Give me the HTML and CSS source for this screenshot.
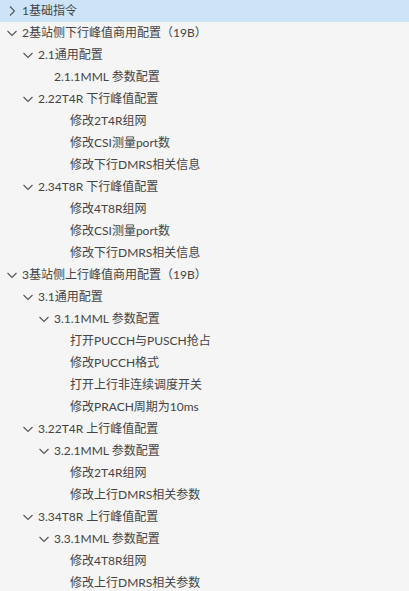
FILE: index.html
```html
<!DOCTYPE html>
<html>
<head>
<meta charset="utf-8">
<link rel="stylesheet" href="styles.css">
</head>
<body>
<div class="tree">
  <div class="row l0 selected"><span class="tw"><svg viewBox="0 0 16 16"><path d="M6 3.5 L10.5 8 L6 12.5"/></svg></span><span class="label">1基础指令</span></div>
  <div class="row l0"><span class="tw"><svg viewBox="0 0 16 16"><path d="M3.5 6 L8 10.5 L12.5 6"/></svg></span><span class="label">2基站侧下行峰值商用配置（19B）</span></div>
  <div class="row l1"><span class="tw"><svg viewBox="0 0 16 16"><path d="M3.5 6 L8 10.5 L12.5 6"/></svg></span><span class="label">2.1通用配置</span></div>
  <div class="row l2"><span class="tw"></span><span class="label">2.1.1MML 参数配置</span></div>
  <div class="row l1"><span class="tw"><svg viewBox="0 0 16 16"><path d="M3.5 6 L8 10.5 L12.5 6"/></svg></span><span class="label">2.22T4R 下行峰值配置</span></div>
  <div class="row l3"><span class="tw"></span><span class="label">修改2T4R组网</span></div>
  <div class="row l3"><span class="tw"></span><span class="label">修改CSI测量port数</span></div>
  <div class="row l3"><span class="tw"></span><span class="label">修改下行DMRS相关信息</span></div>
  <div class="row l1"><span class="tw"><svg viewBox="0 0 16 16"><path d="M3.5 6 L8 10.5 L12.5 6"/></svg></span><span class="label">2.34T8R 下行峰值配置</span></div>
  <div class="row l3"><span class="tw"></span><span class="label">修改4T8R组网</span></div>
  <div class="row l3"><span class="tw"></span><span class="label">修改CSI测量port数</span></div>
  <div class="row l3"><span class="tw"></span><span class="label">修改下行DMRS相关信息</span></div>
  <div class="row l0"><span class="tw"><svg viewBox="0 0 16 16"><path d="M3.5 6 L8 10.5 L12.5 6"/></svg></span><span class="label">3基站侧上行峰值商用配置（19B）</span></div>
  <div class="row l1"><span class="tw"><svg viewBox="0 0 16 16"><path d="M3.5 6 L8 10.5 L12.5 6"/></svg></span><span class="label">3.1通用配置</span></div>
  <div class="row l2"><span class="tw"><svg viewBox="0 0 16 16"><path d="M3.5 6 L8 10.5 L12.5 6"/></svg></span><span class="label">3.1.1MML 参数配置</span></div>
  <div class="row l3"><span class="tw"></span><span class="label">打开PUCCH与PUSCH抢占</span></div>
  <div class="row l3"><span class="tw"></span><span class="label">修改PUCCH格式</span></div>
  <div class="row l3"><span class="tw"></span><span class="label">打开上行非连续调度开关</span></div>
  <div class="row l3"><span class="tw"></span><span class="label">修改PRACH周期为10ms</span></div>
  <div class="row l1"><span class="tw"><svg viewBox="0 0 16 16"><path d="M3.5 6 L8 10.5 L12.5 6"/></svg></span><span class="label">3.22T4R 上行峰值配置</span></div>
  <div class="row l2"><span class="tw"><svg viewBox="0 0 16 16"><path d="M3.5 6 L8 10.5 L12.5 6"/></svg></span><span class="label">3.2.1MML 参数配置</span></div>
  <div class="row l3"><span class="tw"></span><span class="label">修改2T4R组网</span></div>
  <div class="row l3"><span class="tw"></span><span class="label">修改上行DMRS相关参数</span></div>
  <div class="row l1"><span class="tw"><svg viewBox="0 0 16 16"><path d="M3.5 6 L8 10.5 L12.5 6"/></svg></span><span class="label">3.34T8R 上行峰值配置</span></div>
  <div class="row l2"><span class="tw"><svg viewBox="0 0 16 16"><path d="M3.5 6 L8 10.5 L12.5 6"/></svg></span><span class="label">3.3.1MML 参数配置</span></div>
  <div class="row l3"><span class="tw"></span><span class="label">修改4T8R组网</span></div>
  <div class="row l3"><span class="tw"></span><span class="label">修改上行DMRS相关参数</span></div>
</div>
</body>
</html>
```

FILE: styles.css
```css
html, body {
  margin: 0;
  padding: 0;
  background: #f5f5f5;
}
body {
  width: 409px;
  height: 591px;
  overflow: hidden;
  font-family: "Lato", "Noto Sans CJK SC", sans-serif;
  font-size: 12px;
  color: #444444;
}
.tree {
  display: flex;
  flex-direction: column;
}
.row {
  display: flex;
  align-items: center;
  height: 22px;
  white-space: nowrap;
}
.row.selected {
  background: #cde4f8;
}
.l0 { padding-left: 4px; }
.l1 { padding-left: 20px; }
.l2 { padding-left: 36px; }
.l3 { padding-left: 52px; }
.tw {
  width: 16px;
  height: 16px;
  flex: none;
  display: flex;
}
.tw svg {
  width: 16px;
  height: 16px;
  fill: none;
  stroke: #555555;
  stroke-width: 1.1;
}
.label {
  margin-left: 2px;
  line-height: 22px;
}
```
